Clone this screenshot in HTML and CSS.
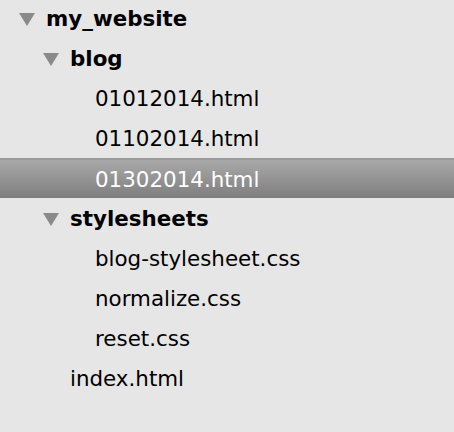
FILE: index.html
```html
<!DOCTYPE html>
<html>
<head>
<meta charset="utf-8">
<link rel="stylesheet" href="styles.css">
</head>
<body>
<ul class="tree">
  <li class="row folder lvl0"><span class="tri"></span><span class="name">my_website</span></li>
  <li class="row folder lvl1"><span class="tri"></span><span class="name">blog</span></li>
  <li class="row file lvl2"><span class="name">01012014.html</span></li>
  <li class="row file lvl2"><span class="name">01102014.html</span></li>
  <li class="row file lvl2 selected"><span class="name">01302014.html</span></li>
  <li class="row folder lvl1"><span class="tri"></span><span class="name">stylesheets</span></li>
  <li class="row file lvl2"><span class="name">blog-stylesheet.css</span></li>
  <li class="row file lvl2"><span class="name">normalize.css</span></li>
  <li class="row file lvl2"><span class="name">reset.css</span></li>
  <li class="row file lvl1"><span class="name">index.html</span></li>
</ul>
</body>
</html>
```
FILE: styles.css
```css
html, body {
  margin: 0;
  padding: 0;
  background: #e6e6e6;
  height: 100%;
}
body {
  font-family: "DejaVu Sans", sans-serif;
  font-size: 21.4px;
  color: #000;
  overflow: hidden;
}
.tree {
  list-style: none;
  margin: -2px 0 0 0;
  padding: 0;
}
.row {
  height: 40px;
  display: flex;
  align-items: center;
  box-sizing: border-box;
}
.folder .name {
  font-weight: bold;
}
.tri {
  width: 0;
  height: 0;
  border-left: 8px solid transparent;
  border-right: 8px solid transparent;
  border-top: 13px solid #8a8a8a;
  margin-right: 11px;
  margin-top: 2px;
}
.lvl0 { padding-left: 19px; }
.folder.lvl1 { padding-left: 43px; }
.file.lvl1 { padding-left: 70px; }
.file.lvl2 { padding-left: 95px; }
.selected {
  background: linear-gradient(#a9a9a9, #7e7e7e);
  border-top: 2px solid #9a9a9a;
  color: #fff;
}
```
